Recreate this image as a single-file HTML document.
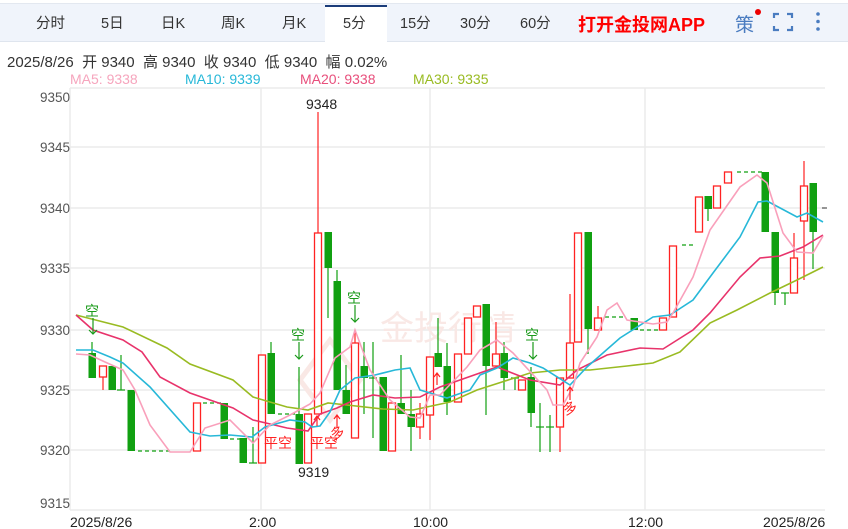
<!DOCTYPE html>
<html><head><meta charset="utf-8"><style>
*{margin:0;padding:0;box-sizing:border-box}
body{width:848px;height:529px;overflow:hidden;background:#fff;font-family:"Liberation Sans","Noto Sans CJK SC",sans-serif;position:relative}
.bar{position:absolute;left:0;top:3px;width:848px;height:39px;background:#f0f4fb;border-top:1px solid #e3e8f0;border-bottom:1px solid #dfe5ee}
.tab{position:absolute;top:12px;font-size:14.5px;color:#333}
.act{position:absolute;left:325px;top:5px;width:62px;height:38px;background:#fff;border-top:2px solid #1b3c7a}
.t{position:absolute;white-space:nowrap}
</style></head><body>
<div class="bar"></div>
<div class="act"></div>
<div class="tab" style="left:36px">分时</div>
<div class="tab" style="left:101px">5日</div>
<div class="tab" style="left:161px">日K</div>
<div class="tab" style="left:221px">周K</div>
<div class="tab" style="left:282px">月K</div>
<div class="tab" style="left:343px">5分</div>
<div class="tab" style="left:400px">15分</div>
<div class="tab" style="left:460px">30分</div>
<div class="tab" style="left:520px">60分</div>
<div class="t" style="left:578px;top:11px;font-size:18px;font-weight:bold;color:#f00">打开金投网APP</div>
<div class="t" style="left:735px;top:10px;font-size:19px;color:#4a7cc0">策</div>
<div style="position:absolute;left:755px;top:9px;width:6px;height:6px;border-radius:3px;background:#e00"></div>
<svg style="position:absolute;left:772px;top:12px" width="22" height="20"><path d="M2 6V2h5M15 2h5v4M20 14v4h-5M7 18H2v-4" fill="none" stroke="#4a7cc0" stroke-width="2.2"/></svg>
<svg style="position:absolute;left:814px;top:11px" width="8" height="22"><circle cx="4" cy="3" r="1.8" fill="#4a7cc0"/><circle cx="4" cy="10.5" r="1.8" fill="#4a7cc0"/><circle cx="4" cy="18" r="1.8" fill="#4a7cc0"/></svg>
<div class="t" style="left:7px;top:51px;font-size:15px;color:#333">2025/8/26 &nbsp;开 9340 &nbsp;高 9340 &nbsp;收 9340 &nbsp;低 9340 &nbsp;幅 0.02%</div>
<div class="t" style="left:70px;top:71px;font-size:14px;color:#f6a5bd">MA5: 9338</div>
<div class="t" style="left:185px;top:71px;font-size:14px;color:#27b8d8">MA10: 9339</div>
<div class="t" style="left:300px;top:71px;font-size:14px;color:#e84f7c">MA20: 9338</div>
<div class="t" style="left:413px;top:71px;font-size:14px;color:#99bb22">MA30: 9335</div>
<svg style="position:absolute;left:0;top:0" width="848" height="529" font-family="Liberation Sans, Noto Sans CJK SC, sans-serif">
<g stroke="#ebebeb" stroke-width="1.5" fill="none">
<path d="M70 88H825M70 147H825M70 208H825M70 268H825M70 330H825M70 390H825M70 450H825M70 510H825"/>
<path d="M261 88V510M430 88V510M645 88V510M70 88V510"/>
</g>
<g fill="#555" font-size="13.5" text-anchor="end">
<text x="70" y="102">9350</text><text x="70" y="152">9345</text><text x="70" y="213">9340</text><text x="70" y="273">9335</text><text x="70" y="335">9330</text><text x="70" y="395">9325</text><text x="70" y="455">9320</text><text x="70" y="508">9315</text>
</g>
<g fill="#222" font-size="14">
<text x="70" y="527">2025/8/26</text><text x="249" y="527">2:00</text><text x="413" y="527">10:00</text><text x="628" y="527">12:00</text><text x="763" y="527">2025/8/26</text>
</g>
<text x="380" y="340" font-size="34" fill="#f9e8e5">金投行情</text>
<path d="M300 380l30-40 30 40-30 40z" fill="none" stroke="#f9e8e5" stroke-width="5"/>
<g id="c"></g>
<g fill="none" stroke-width="1.6">
<polyline stroke="#99bb22" points="76,315 123,327 167,348 190,364 233,380 253,397 287,407 308,410 328,403 347,405 383,409 413,410 450,402 477,390 530,373 560,370 590,370 627,366 653,363 680,352 710,323 737,310 770,293 797,280 823,267"/>
<polyline stroke="#e8336b" points="76,315 93,330 123,340 142,352 160,377 190,393 210,400 233,408 253,420 287,428 308,431 320,414 337,408 350,402 373,395 395,398 420,397 440,387 497,367 530,380 560,385 577,370 607,355 640,348 663,349 693,330 710,313 740,277 760,258 780,256 803,247 823,235"/>
<polyline stroke="#27b8d8" points="76,350 93,350 110,357 123,363 150,387 190,432 210,436 230,435 252,437 265,427 290,420 305,422 312,427 320,426 330,412 340,390 355,378 375,375 395,370 410,368 420,390 447,398 470,390 480,375 497,368 513,358 530,363 543,368 570,385 587,367 620,338 653,317 670,315 693,300 713,273 740,237 758,202 767,201 797,217 807,213 823,222"/>
<polyline stroke="#f9a0bb" points="76,354 90,355 105,362 123,370 135,390 150,425 170,452 190,452 205,428 230,420 253,443 270,425 290,415 310,404 320,393 335,358 350,347 355,330 370,370 390,400 410,417 420,418 430,395 440,395 467,367 480,350 497,340 513,353 547,390 553,405 563,405 573,387 580,363 597,337 607,310 617,303 627,320 653,324 667,322 673,313 693,277 710,230 740,187 757,175 767,183 783,233 797,252 813,253 823,236"/>
</g>
<text x="306" y="109" font-size="14" fill="#222">9348</text>
<text x="298" y="477" font-size="14" fill="#222">9319</text>
<g fill="#1a9a1a" font-size="14" stroke="none">
<text x="85" y="316">空</text><text x="291" y="340">空</text><text x="347" y="303">空</text><text x="525" y="340">空</text>
</g>
<g stroke="#1a9a1a" stroke-width="1.2" fill="none">
<path d="M93 318v16M89 330l4 4 4-4M299 342v17M295 355l4 4 4-4M355 305v17M351 318l4 4 4-4M533 342v17M529 355l4 4 4-4"/>
</g>
<g fill="#f22" font-size="14">
<text x="264" y="448">平空</text><text x="310" y="448">平空</text><text x="330" y="438" transform="rotate(-20 337 432)">多</text><text x="563" y="413" transform="rotate(-20 570 408)">多</text>
</g>
<g stroke="#f22" stroke-width="1.2" fill="none">
<path d="M317 426v-10M314 420l3-4 3 4M337 428v-13M334 419l3-4 3 4M437 385v-12M434 377l3-4 3 4M570 400v-13M567 391l3-4 3 4"/>
</g>
<path d="M822 208h5" stroke="#333"/>
</svg>
<script>
var C=[[92,'g',353,378,342,378],[103,'r',366,377,366,390],[112,'g',366,390,366,390],[121,'d',390,390,355,390],[131,'g',390,451,390,451],
[197,'r',403,451,403,451],[224,'g',403,439,403,439],[243,'g',438,463,438,463],[253,'d',463,463,427,463],[262,'r',355,463,355,463],
[271,'g',353,414,342,414],[299,'g',414,464,367,464],[308,'r',414,463,414,463],[318,'r',233,414,112,414],[328,'g',232,268,232,318],
[337,'g',281,390,270,390],[346,'g',390,414,365,414],[355,'r',343,438,330,438],[364,'g',366,378,342,414],[373,'d',378,378,342,438],
[383,'g',377,451,377,451],[392,'r',403,451,403,451],[401,'g',403,414,355,414],[411,'g',414,427,390,451],[420,'r',414,427,403,439],
[430,'r',357,415,357,440],[438,'g',353,367,318,367],[447,'g',366,402,343,415],[458,'r',354,402,354,402],[468,'r',318,354,318,354],
[477,'r',306,317,306,317],[486,'g',304,366,304,415],[496,'r',354,366,322,366],[504,'g',353,378,342,390],[515,'d',378,378,378,390],
[522,'r',380,390,380,390],[531,'g',377,413,367,427],[540,'d',427,427,403,452],[550,'d',427,427,415,452],[560,'r',378,427,378,452],
[570,'r',343,378,294,378],[578,'r',233,342,233,342],[588,'g',232,329,232,354],[598,'r',318,330,306,330],[634,'g',318,330,318,330],
[663,'r',318,330,318,330],[673,'r',246,317,246,317],[699,'r',197,232,197,232],[708,'g',196,209,196,221],[717,'r',186,208,186,208],
[728,'r',172,183,172,183],[765,'g',172,232,172,232],[775,'g',232,293,232,305],[785,'d',293,293,293,305],[794,'r',258,293,233,293],
[804,'r',186,221,161,280],[813,'g',183,232,183,269]];
var D=[[138,170,451],[203,222,403],[230,240,439],[278,295,414],[605,625,317],[640,660,330],[682,695,245],[737,763,172]];
var s='';
C.forEach(function(c){var x=c[0],col=c[1]=='r'?'#f22':'#11a011';
s+='<line x1="'+x+'" y1="'+c[4]+'" x2="'+x+'" y2="'+c[5]+'" stroke="'+col+'" stroke-width="1.2"/>';
if(c[1]=='r')s+='<rect x="'+(x-3.5)+'" y="'+c[2]+'" width="7" height="'+Math.max(1,c[3]-c[2])+'" fill="#fff" stroke="#f22" stroke-width="1.3"/>';
else if(c[1]=='g')s+='<rect x="'+(x-3.5)+'" y="'+c[2]+'" width="7.5" height="'+Math.max(1,c[3]-c[2])+'" fill="#11a011"/>';
else s+='<line x1="'+(x-4)+'" y1="'+c[2]+'" x2="'+(x+4)+'" y2="'+c[2]+'" stroke="#11a011" stroke-width="1.2"/>';});
D.forEach(function(d){s+='<line x1="'+d[0]+'" y1="'+d[2]+'" x2="'+d[1]+'" y2="'+d[2]+'" stroke="#11a011" stroke-width="1.3" stroke-dasharray="4 3"/>';});
document.getElementById('c').innerHTML=s;
</script>
</body></html>
